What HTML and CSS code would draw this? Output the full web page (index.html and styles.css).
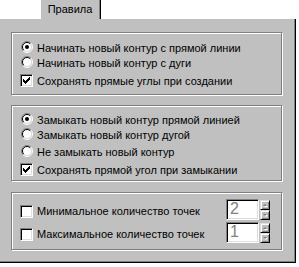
FILE: index.html
```html
<!DOCTYPE html>
<html lang="ru">
<head>
  <meta charset="UTF-8">
  <title>Правила</title>
  <link rel="stylesheet" href="styles.css">
</head>
<body>
  <div class="dialog">
    <div class="tabs">
      <div class="tab">Правила</div>
    </div>
    <div class="page">
      <!-- начало контура -->
      <div class="group g1">
        <div class="opt">
          <span class="mark"><svg class="radio" viewBox="0 0 12 12"><circle cx="6" cy="6" r="4.5" fill="#fff"/><path d="M2.1 9.9A5.5 5.5 0 0 1 9.9 2.1" stroke="#808080"/><path d="M9.9 2.1A5.5 5.5 0 0 1 2.1 9.9" stroke="#fff"/><path d="M2.8 9.2A4.5 4.5 0 0 1 9.2 2.8" stroke="#000"/><path d="M9.2 2.8A4.5 4.5 0 0 1 2.8 9.2" stroke="#dfdfdf"/><circle cx="6" cy="6" r="2" fill="#000"/></svg></span>
          Начинать новый контур с прямой линии
        </div>
        <div class="opt">
          <span class="mark"><svg class="radio" viewBox="0 0 12 12"><circle cx="6" cy="6" r="4.5" fill="#fff"/><path d="M2.1 9.9A5.5 5.5 0 0 1 9.9 2.1" stroke="#808080"/><path d="M9.9 2.1A5.5 5.5 0 0 1 2.1 9.9" stroke="#fff"/><path d="M2.8 9.2A4.5 4.5 0 0 1 9.2 2.8" stroke="#000"/><path d="M9.2 2.8A4.5 4.5 0 0 1 2.8 9.2" stroke="#dfdfdf"/></svg></span>
          Начинать новый контур с дуги
        </div>
        <div class="opt gap3">
          <span class="mark"><span class="check"><svg viewBox="0 0 13 13"><path d="M9 3h1v1h-1zM8 4h2v1h-2zM3 5h1v1h-1zM7 5h3v1h-3zM3 6h2v1h-2zM6 6h3v1h-3zM3 7h5v1h-5zM4 8h3v1h-3zM5 9h1v1h-1z" fill="#000"/></svg></span></span>
          Сохранять прямые углы при создании
        </div>
      </div>

      <!-- замыкание контура -->
      <div class="group g2">
        <div class="opt">
          <span class="mark"><svg class="radio" viewBox="0 0 12 12"><circle cx="6" cy="6" r="4.5" fill="#fff"/><path d="M2.1 9.9A5.5 5.5 0 0 1 9.9 2.1" stroke="#808080"/><path d="M9.9 2.1A5.5 5.5 0 0 1 2.1 9.9" stroke="#fff"/><path d="M2.8 9.2A4.5 4.5 0 0 1 9.2 2.8" stroke="#000"/><path d="M9.2 2.8A4.5 4.5 0 0 1 2.8 9.2" stroke="#dfdfdf"/><circle cx="6" cy="6" r="2" fill="#000"/></svg></span>
          Замыкать новый контур прямой линией
        </div>
        <div class="opt">
          <span class="mark"><svg class="radio" viewBox="0 0 12 12"><circle cx="6" cy="6" r="4.5" fill="#fff"/><path d="M2.1 9.9A5.5 5.5 0 0 1 9.9 2.1" stroke="#808080"/><path d="M9.9 2.1A5.5 5.5 0 0 1 2.1 9.9" stroke="#fff"/><path d="M2.8 9.2A4.5 4.5 0 0 1 9.2 2.8" stroke="#000"/><path d="M9.2 2.8A4.5 4.5 0 0 1 2.8 9.2" stroke="#dfdfdf"/></svg></span>
          Замыкать новый контур дугой
        </div>
        <div class="opt gap2">
          <span class="mark"><svg class="radio" viewBox="0 0 12 12"><circle cx="6" cy="6" r="4.5" fill="#fff"/><path d="M2.1 9.9A5.5 5.5 0 0 1 9.9 2.1" stroke="#808080"/><path d="M9.9 2.1A5.5 5.5 0 0 1 2.1 9.9" stroke="#fff"/><path d="M2.8 9.2A4.5 4.5 0 0 1 9.2 2.8" stroke="#000"/><path d="M9.2 2.8A4.5 4.5 0 0 1 2.8 9.2" stroke="#dfdfdf"/></svg></span>
          Не замыкать новый контур
        </div>
        <div class="opt gap3">
          <span class="mark"><span class="check"><svg viewBox="0 0 13 13"><path d="M9 3h1v1h-1zM8 4h2v1h-2zM3 5h1v1h-1zM7 5h3v1h-3zM3 6h2v1h-2zM6 6h3v1h-3zM3 7h5v1h-5zM4 8h3v1h-3zM5 9h1v1h-1z" fill="#000"/></svg></span></span>
          Сохранять прямой угол при замыкании
        </div>
      </div>

      <!-- количество точек -->
      <div class="group g3">
        <div class="row">
          <div class="opt">
            <span class="mark"><span class="check"></span></span>
            Минимальное количество точек
          </div>
          <div class="spin">
            <div class="edit">2</div>
            <div class="btns">
              <div class="btn"><span class="arrow up"></span></div>
              <div class="btn"><span class="arrow down"></span></div>
            </div>
          </div>
        </div>
        <div class="row">
          <div class="opt">
            <span class="mark"><span class="check"></span></span>
            Максимальное количество точек
          </div>
          <div class="spin">
            <div class="edit">1</div>
            <div class="btns">
              <div class="btn"><span class="arrow up"></span></div>
              <div class="btn"><span class="arrow down"></span></div>
            </div>
          </div>
        </div>
      </div>
    </div>
  </div>
</body>
</html>
```

FILE: styles.css
```css
* {
  box-sizing: border-box;
}
html, body {
  margin: 0;
  padding: 0;
  background: #fff;
}
body {
  font-family: "Liberation Sans", Arial, sans-serif;
  font-size: 11px;
  color: #000;
}

.dialog {
  width: 296px;
}
.tabs {
  display: flex;
  height: 19px;
  padding-left: 41px;
}
.tab {
  width: 60px;
  height: 19px;
  background: #c0c0c0;
  border-right: 1px solid #000;
  box-shadow: inset -1px 0 #808080;
  text-align: center;
  line-height: 18px;
  padding-right: 1px;
}

.page {
  height: 244px;
  background: #c0c0c0;
  border-right: 1px solid #000;
  border-bottom: 1px solid #000;
  box-shadow: inset -1px -1px #808080;
  padding: 13px 13px 0 11px;
}

.group {
  border: 1px solid #808080;
  box-shadow: inset 1px 1px #fff, 1px 1px #fff;
  padding-left: 8px;
}
.g1 {
  height: 63px;
  padding-top: 7px;
}
.g2 {
  height: 76px;
  margin-top: 10px;
  padding-top: 6px;
}
.g3 {
  height: 58px;
  margin-top: 11px;
  padding-top: 6px;
  padding-right: 11px;
}

.opt {
  display: flex;
  align-items: center;
  height: 15px;
  white-space: nowrap;
}
.gap2 {
  margin-top: 2px;
}
.gap3 {
  margin-top: 3px;
}
.mark {
  display: flex;
  width: 13px;
  height: 13px;
  margin-right: 4px;
}
.radio {
  width: 12px;
  height: 12px;
  margin-left: 1px;
  fill: none;
  stroke-width: 1;
}
.check {
  width: 13px;
  height: 13px;
  background: #fff;
  border: 1px solid;
  border-color: #808080 #fff #fff #808080;
  box-shadow: inset 1px 1px #000, inset -1px -1px #dfdfdf;
  position: relative;
}
.check svg {
  position: absolute;
  left: -1px;
  top: -1px;
  width: 13px;
  height: 13px;
  shape-rendering: crispEdges;
}

.row {
  display: flex;
  justify-content: space-between;
  align-items: center;
  height: 21px;
}
.row + .row {
  margin-top: 2px;
}
.row .opt {
  margin-top: 3px;
}

.spin {
  display: flex;
  align-items: flex-start;
}
.edit {
  width: 33px;
  height: 21px;
  background: #fff;
  border: 1px solid;
  border-color: #808080 #fff #fff #808080;
  box-shadow: inset 1px 1px #000, inset -1px -1px #dfdfdf;
  color: #808080;
  font-size: 16px;
  line-height: 18px;
  padding-left: 3px;
}
.btns {
  display: flex;
  flex-direction: column;
  margin-left: 1px;
  margin-top: 1px;
}
.btn {
  width: 10px;
  height: 10px;
  background: #c0c0c0;
  border: 1px solid;
  border-color: #dfdfdf #000 #000 #dfdfdf;
  box-shadow: inset 1px 1px #fff, inset -1px -1px #808080;
  display: flex;
  align-items: center;
  justify-content: center;
}
.arrow {
  width: 0;
  height: 0;
  border-left: 2px solid transparent;
  border-right: 2px solid transparent;
}
.arrow.up {
  border-bottom: 2px solid #808080;
  filter: drop-shadow(1px 1px 0 #fff);
}
.arrow.down {
  border-top: 2px solid #808080;
  filter: drop-shadow(1px 1px 0 #fff);
}
```
